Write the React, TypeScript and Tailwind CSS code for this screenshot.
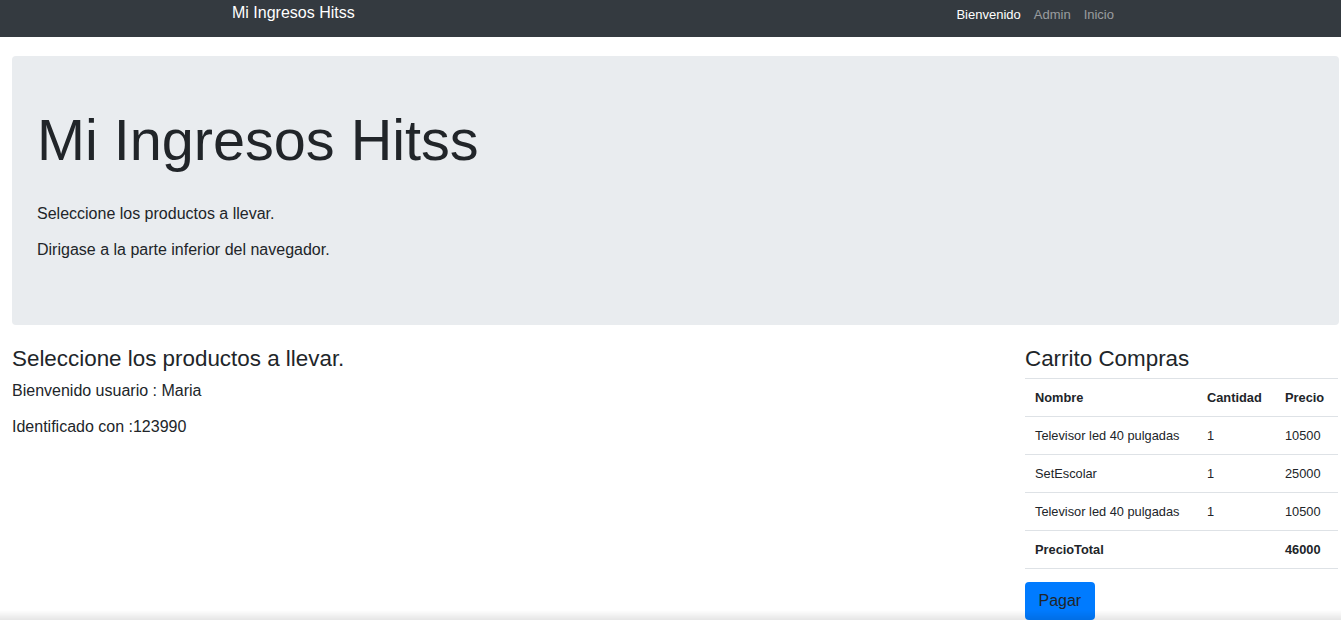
import React from 'react';

type Item = { nombre: string; cantidad: number; precio: number };

const items: Item[] = [
  { nombre: 'Televisor led 40 pulgadas', cantidad: 1, precio: 10500 },
  { nombre: 'SetEscolar', cantidad: 1, precio: 25000 },
  { nombre: 'Televisor led 40 pulgadas', cantidad: 1, precio: 10500 },
];

const Navbar: React.FC = () => (
  <nav className="h-[37px] bg-[#343a40] flex items-start pt-[3px]">
    <a className="ml-[232px] text-[16px] leading-[20px] text-white">Mi Ingresos Hitss</a>
    <ul className="ml-auto mr-[227px] flex items-center gap-[13px] text-[13px] leading-[24px]">
      <li className="text-white">Bienvenido</li>
      <li className="text-white/50">Admin</li>
      <li className="text-white/50">Inicio</li>
    </ul>
  </nav>
);

const App: React.FC = () => {
  const total = items.reduce((acc, i) => acc + i.precio, 0);

  return (
    <div className="min-h-screen bg-white text-[#212529] font-['Liberation_Sans',Arial,sans-serif]">
      <Navbar />

      {/* Jumbotron */}
      <div className="ml-3 mr-[2px] mt-[19px] rounded-[4px] bg-[#e9ecef] pl-[25px] pt-[51px] pb-[63px]">
        <h1 className="text-[57.6px] leading-[67px] font-light mb-[28px]">Mi Ingresos Hitss</h1>
        <p className="text-[16px] leading-6 mb-3">Seleccione los productos a llevar.</p>
        <p className="text-[16px] leading-6">Dirigase a la parte inferior del navegador.</p>
      </div>

      {/* Content */}
      <div className="flex pl-3 pr-[3px] mt-[20px]">
        <div className="flex-1">
          <h4 className="text-[22.4px] leading-[27px] mb-[7px]">Seleccione los productos a llevar.</h4>
          <p className="text-[16px] leading-6 mb-3">Bienvenido usuario : Maria</p>
          <p className="text-[16px] leading-6">Identificado con :123990</p>
        </div>

        <div className="w-[313px]">
          <h4 className="text-[22.4px] leading-[27px] mb-[6px]">Carrito Compras</h4>
          <table className="w-full border-collapse text-[12.8px]">
            <thead>
              <tr className="border-t border-b border-[#dee2e6] h-[38px]">
                <th className="w-[172px] pl-[10px] text-left font-bold">Nombre</th>
                <th className="w-[78px] pl-[10px] text-left font-bold">Cantidad</th>
                <th className="pl-[10px] text-left font-bold">Precio</th>
              </tr>
            </thead>
            <tbody>
              {items.map((item, idx) => (
                <tr key={idx} className="border-b border-[#dee2e6] h-[38px]">
                  <td className="pl-[10px]">{item.nombre}</td>
                  <td className="pl-[10px]">{item.cantidad}</td>
                  <td className="pl-[10px]">{item.precio}</td>
                </tr>
              ))}
              <tr className="border-b border-[#dee2e6] h-[38px]">
                <td className="pl-[10px] font-bold">PrecioTotal</td>
                <td className="pl-[10px]"></td>
                <td className="pl-[10px] font-bold">{total}</td>
              </tr>
            </tbody>
          </table>
          <button className="mt-[13px] h-[38px] px-[13.5px] rounded-[4px] bg-[#007bff] text-[16px] text-[#212529]">
            Pagar
          </button>
        </div>
      </div>

      {/* bottom shadow */}
      <div className="fixed bottom-0 left-0 right-0 h-[10px] bg-gradient-to-b from-transparent to-black/10 pointer-events-none"></div>
    </div>
  );
};

export default App;
